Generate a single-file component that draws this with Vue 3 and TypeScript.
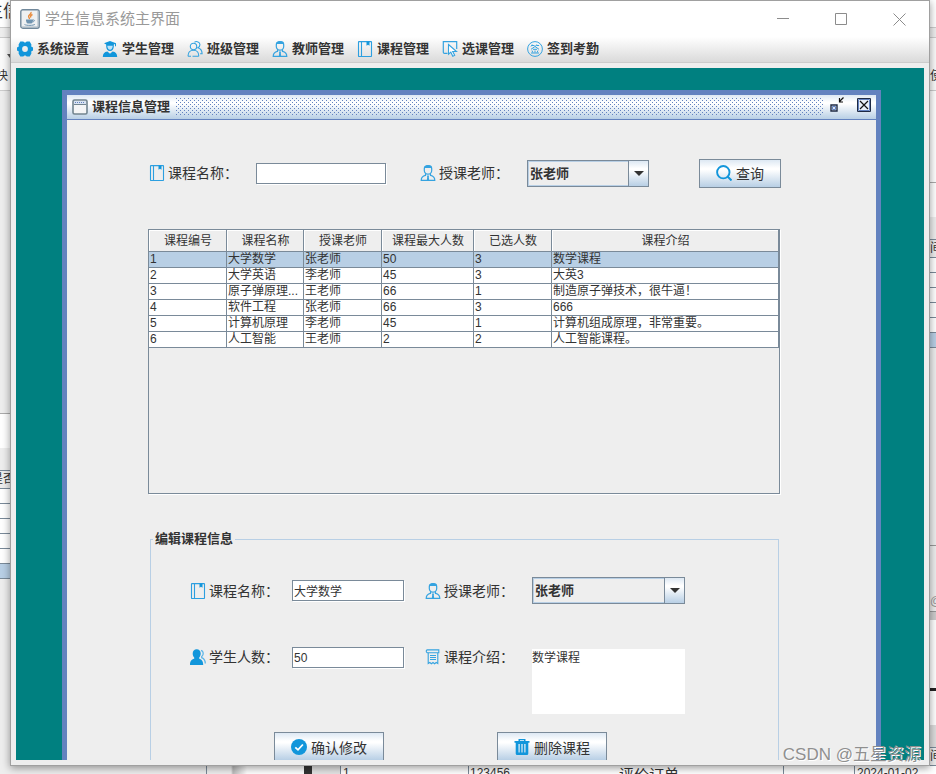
<script setup lang="ts">
import { ref } from 'vue'

interface Course {
  id: number
  name: string
  teacher: string
  max: number
  selected: number
  info: string
}

const menus = [
  { icon: 'gear', label: '系统设置' },
  { icon: 'student', label: '学生管理' },
  { icon: 'group', label: '班级管理' },
  { icon: 'teacher', label: '教师管理' },
  { icon: 'book', label: '课程管理' },
  { icon: 'pick', label: '选课管理' },
  { icon: 'sign', label: '签到考勤' },
]

const headers = ['课程编号', '课程名称', '授课老师', '课程最大人数', '已选人数', '课程介绍']
const teachers = ['张老师', '李老师', '王老师']

const courses: Course[] = [
  { id: 1, name: '大学数学', teacher: '张老师', max: 50, selected: 3, info: '数学课程' },
  { id: 2, name: '大学英语', teacher: '李老师', max: 45, selected: 3, info: '大英3' },
  { id: 3, name: '原子弹原理...', teacher: '王老师', max: 66, selected: 1, info: '制造原子弹技术，很牛逼！' },
  { id: 4, name: '软件工程', teacher: '张老师', max: 66, selected: 3, info: '666' },
  { id: 5, name: '计算机原理', teacher: '李老师', max: 45, selected: 1, info: '计算机组成原理，非常重要。' },
  { id: 6, name: '人工智能', teacher: '王老师', max: 2, selected: 2, info: '人工智能课程。' },
]

const searchName = ref('')
const searchTeacher = ref('张老师')
const current = ref(1)
const editName = ref('大学数学')
const editTeacher = ref('张老师')
const editMax = ref('50')
const editInfo = ref('数学课程')

function choose(c: Course) {
  current.value = c.id
  editName.value = c.name
  editTeacher.value = c.teacher
  editMax.value = String(c.max)
  editInfo.value = c.info
}
</script>

<template>
  <div class="screen">
    <svg class="defs" aria-hidden="true">
      <symbol id="gear" viewBox="0 0 16 16">
        <path fill="#1296db" fill-rule="evenodd" d="M3.300.5h2.900l1.800 1.300L9.800.5h2.900l1.700 3-.2 2 1.800.9v3.200l-1.800.9.200 2-1.700 3H9.800L8 14.200l-1.800 1.300H3.300l-1.700-3 .2-2L0 9.600V6.400l1.800-.9-.2-2zM8 5.100a2.900 2.900 0 1 0 0 5.800 2.900 2.900 0 0 0 0-5.800z" />
      </symbol>
      <symbol id="student" viewBox="0 0 16 16">
        <path fill="#1296db" d="M8 0l6 2.200v3h-1V3l-1.200.4v2c0 2.600-1.600 4.600-3.800 4.600S4.200 8 4.200 5.400v-2L2 2.200z" />
        <path fill="#bfe3f7" d="M5.300 4.700h5.400C10.700 7 9.700 8.700 8 8.700S5.300 7 5.300 4.700z" />
        <path fill="#1296db" d="M.8 16c0-3.400 1.500-4.800 4.600-5.400L8 12.700l2.600-2.100c3.100.6 4.600 2 4.600 5.400z" />
      </symbol>
      <symbol id="group" viewBox="0 0 16 16">
        <g fill="none" stroke="#35a3e0" stroke-width="1.100">
          <circle cx="6.500" cy="5.500" r="3.200" />
          <path d="M1 15.300c0-3.700 2-6 5.500-6 3.400 0 5.300 2.300 5.300 6M1 15.300h3M5.500 15.300h6.300M7.500 1.200c2-1.400 5.600-.3 5.400 2.600 0 1.300-.7 2.400-2 3 2.600.8 4.200 3 4.200 6h-2" />
        </g>
      </symbol>
      <symbol id="teacher" viewBox="0 0 16 16">
        <path fill="none" stroke="#35a3e0" stroke-width="1.200" d="M4.300 3.500C4.300 1.600 5.700.7 8 .7s3.700.9 3.700 2.800v2C11.700 7.600 10 9.200 8 9.200S4.300 7.600 4.300 5.500zM5.500 8.700v1.700c-3 .7-4.300 1.800-4.300 5h13.600c0-3.200-1.300-4.300-4.300-5V8.700M8 11v4" />
        <path fill="#35a3e0" d="M4 4.500C3.700 1.500 5 .3 8 .3s4.300 1.200 4 4.200L10.800 3H5.200zM7 10.500h2L8.500 12l.7 2.500L8 15.500l-1.200-1 .7-2.500z" />
      </symbol>
      <symbol id="book" viewBox="0 0 16 16">
        <path fill="none" stroke="#2c9fe0" stroke-width="1.100" d="M2 .6h12q.5 0 .5.500v14q0 .4-.5.400H2q-.5 0-.5-.5V1.100Q1.500.6 2 .6zM4.500.6v15" />
        <path fill="#1296db" d="M9.500.6h3v4.200L11 3.700 9.500 4.800z" />
      </symbol>
      <symbol id="pick" viewBox="0 0 16 16">
        <path fill="none" stroke="#35a3e0" stroke-width="1.200" d="M5.500 12.400H2.500q-1.200 0-1.200-1.200V.7h13.400V8" />
        <path fill="#fff" stroke="#35a3e0" stroke-width="1.100" d="M6.500 3.500v9.700l2.300-2 2 4.100 1.900-1-2-3.800h3.800z" />
      </symbol>
      <symbol id="sign" viewBox="0 0 16 16">
        <circle cx="8" cy="8" r="7.400" fill="none" stroke="#35a3e0" />
        <path fill="none" stroke="#35a3e0" d="M5.200 3.500L4 5.500M5 4.500h2.500M9.700 3.500l-1.200 2M9.500 4.500h2.600M8 5.500L4 8.300M8 5.500l4 2.800M6 8.300h4M5 9.500l.8 2M8 9.500v2M11 9.500l-1 2M4 12h8" />
      </symbol>
      <symbol id="search" viewBox="0 0 16 16">
        <circle cx="7.300" cy="7.200" r="6.200" fill="none" stroke="#1296db" stroke-width="1.900" />
        <path stroke="#1296db" stroke-width="2" d="M11.500 11.500l4 4" />
      </symbol>
      <symbol id="people" viewBox="0 0 16 16">
        <path fill="#1296db" d="M6.700.3c2.500 0 4 1.800 4 4.200 0 1.700-.6 3.100-1.500 4v1.300c2.600.8 4 2.200 4 6.200H0c0-4 1.400-5.400 4.200-6.200V8.500c-1-.9-1.500-2.300-1.500-4 0-2.400 1.500-4.200 4-4.200z" />
        <path fill="none" stroke="#5bb6e8" stroke-width="1.300" d="M11 1.300c2.600.6 3 4.600.7 6.200v1.200c2.400 1 3.600 2.800 3.600 5.800" />
      </symbol>
      <symbol id="note" viewBox="0 0 16 16">
        <path fill="none" stroke="#35a3e0" stroke-width="1.100" d="M3.500 3.700H2.200C.8 3 1 1.200 2.300.9h11.500v2.800H3.500zM3.200 3.700v10.800l1.600-1 1.600 1.300 1.600-1.300 1.600 1.300 1.600-1.300 1.600 1V3.700M5 6.500h6M5 8.500h6M5 10.500h6" />
      </symbol>
      <symbol id="check" viewBox="0 0 16 16">
        <circle cx="8" cy="8" r="8" fill="#1296db" />
        <path fill="none" stroke="#fff" stroke-width="1.800" d="M4.300 8.300l2.700 2.500 4.900-5.300" />
      </symbol>
      <symbol id="trash" viewBox="0 0 16 16">
        <path fill="#1296db" fill-rule="evenodd" d="M4.500 0h7v2H15.500v1.800h-1.200V14.500q0 1.500-1.500 1.500H3.200q-1.500 0-1.500-1.500V3.800H.5V2h4zM6 1.200V2h4v-.8zM4.500 5v8.500h1.200V5zM7.400 5v8.500h1.200V5zM10.300 5v8.500h1.200V5z" />
      </symbol>
    </svg>

    <div class="strip left" aria-hidden="true">
      <div class="doc-head"><span class="big">生信</span></div>
      <div class="doc-bar"></div>
      <div class="doc-tool"><i class="tri"></i><span>快</span></div>
      <div class="gap-left"></div>
      <div class="paper"></div>
      <div class="grey"></div>
      <div class="mini-row label">是否</div>
      <div v-for="n in 5" :key="n" class="mini-row"></div>
      <div class="mini-row blue"></div>
    </div>

    <main class="window">
      <header class="titlebar">
        <svg class="java" viewBox="0 0 20 20">
          <rect x=".8" y=".8" width="18.400" height="18.400" rx="2" fill="#eef0f2" stroke="#71889b" stroke-width="1.400" />
          <path d="M2 18h16V2" fill="none" stroke="#a8b6c2" />
          <path fill="none" stroke="#e8893a" stroke-width="1.400" d="M11 3c1 2-3 2.800-2.400 4.700.2.900 1 1.300.8 2.300M12.500 5.500c-2 .9-2.300 1.800-1.500 3" />
          <path fill="#6f93b0" d="M6 10.600h7v1q-.3 2.400-1.500 2.900h-4Q6.300 14 6 11.600z" />
          <path fill="none" stroke="#6f93b0" d="M13 11c2-.5 2 1.500-.5 2M4.500 15.500c2 1.200 9 1.200 10.500-.2" />
        </svg>
        <h1>学生信息系统主界面</h1>
        <button type="button" aria-label="最小化"><svg viewBox="0 0 13 13"><path d="M0 5.500h12" /></svg></button>
        <button type="button" aria-label="最大化"><svg viewBox="0 0 13 13"><path d="M.5.500h11v11H.5z" /></svg></button>
        <button type="button" aria-label="关闭"><svg viewBox="0 0 13 13"><path d="M.5.500l12 12M12.500.500l-12 12" /></svg></button>
      </header>

      <nav class="menubar">
        <button v-for="m in menus" :key="m.icon" type="button">
          <svg class="icon"><use :href="'#' + m.icon" /></svg>{{ m.label }}
        </button>
      </nav>

      <div class="body">
        <div class="desktop">
          <section class="frame">
            <div class="frame-title">
              <svg class="frame-icon" viewBox="0 0 16 16">
                <rect x="1" y="1" width="14" height="14" rx="1.500" fill="#f4f5f6" stroke="#71848f" stroke-width="1.600" />
                <path d="M2 2h12v3H2z" fill="#d8e3f2" />
                <path d="M3 3.500h10" stroke="#6382bf" stroke-dasharray="1 1" />
                <path d="M2 5.500h12" stroke="#71848f" />
              </svg>
              <h2>课程信息管理</h2>
              <div class="dots"></div>
              <button type="button" aria-label="还原">
                <svg viewBox="0 0 16 16">
                  <path d="M2 8h6v6H2z" fill="#fff" stroke="#1e2a44" stroke-width="1.400" />
                  <path d="M3.500 9.500h3v3h-3z" fill="#d8e3f2" stroke="#6382bf" />
                  <path d="M14.500.500L10.500 4.500M10.500 1v4h3.500" fill="none" stroke="#111" stroke-width="1.200" />
                </svg>
              </button>
              <button type="button" aria-label="关闭窗口">
                <svg viewBox="0 0 16 16">
                  <path d="M1.500 1.500h13v13h-13z" fill="#e8eff8" stroke="#1e2a44" />
                  <path d="M2.500 2.500h11v11h-11z" fill="none" stroke="#6382bf" />
                  <path d="M4 4l8 8M12 4l-8 8" stroke="#111" stroke-width="1.200" />
                </svg>
              </button>
            </div>

            <form class="search" @submit.prevent>
              <label for="s-name"><svg class="icon"><use href="#book" /></svg>课程名称：</label>
              <input id="s-name" v-model="searchName" class="text wide" type="text" />
              <label for="s-teacher"><svg class="icon"><use href="#teacher" /></svg>授课老师：</label>
              <span class="combo narrow">
                <select id="s-teacher" v-model="searchTeacher">
                  <option v-for="t in teachers" :key="t">{{ t }}</option>
                </select>
                <span class="arrow"><svg viewBox="0 0 10 5"><path d="M0 0h10L5 5z" /></svg></span>
              </span>
              <button class="metal query" type="submit"><svg class="icon"><use href="#search" /></svg>查询</button>
            </form>

            <div class="pane">
              <table>
                <colgroup><col class="c78" /><col class="c77" /><col class="c78" /><col class="c92" /><col class="c78" /><col /></colgroup>
                <thead>
                  <tr><th v-for="h in headers" :key="h" scope="col">{{ h }}</th></tr>
                </thead>
                <tbody>
                  <tr v-for="c in courses" :key="c.id" :class="{ on: c.id === current }" @click="choose(c)">
                    <td>{{ c.id }}</td>
                    <td>{{ c.name }}</td>
                    <td>{{ c.teacher }}</td>
                    <td>{{ c.max }}</td>
                    <td>{{ c.selected }}</td>
                    <td>{{ c.info }}</td>
                  </tr>
                </tbody>
              </table>
            </div>

            <fieldset>
              <legend>编辑课程信息</legend>
              <div class="edit first">
                <label for="e-name"><svg class="icon"><use href="#book" /></svg>课程名称：</label>
                <input id="e-name" v-model="editName" class="text short" type="text" />
                <label for="e-teacher"><svg class="icon"><use href="#teacher" /></svg>授课老师：</label>
                <span class="combo">
                  <select id="e-teacher" v-model="editTeacher">
                    <option v-for="t in teachers" :key="t">{{ t }}</option>
                  </select>
                  <span class="arrow"><svg viewBox="0 0 10 5"><path d="M0 0h10L5 5z" /></svg></span>
                </span>
              </div>
              <div class="edit second">
                <label for="e-max"><svg class="icon"><use href="#people" /></svg>学生人数：</label>
                <input id="e-max" v-model="editMax" class="text short" type="text" />
                <label for="e-info"><svg class="icon"><use href="#note" /></svg>课程介绍：</label>
                <textarea id="e-info" v-model="editInfo"></textarea>
              </div>
              <div class="actions">
                <button class="metal action" type="button"><svg class="icon"><use href="#check" /></svg>确认修改</button>
                <button class="metal action" type="button"><svg class="icon"><use href="#trash" /></svg>删除课程</button>
              </div>
            </fieldset>
          </section>
        </div>
      </div>
    </main>

    <div class="strip right" aria-hidden="true">
      <div class="doc-head"></div>
      <div class="doc-bar"></div>
      <div class="doc-tool"><span>使</span></div>
      <div class="gap-right"></div>
      <div class="paper"></div>
      <div class="grey"></div>
      <div class="mini-row label">间</div>
      <div v-for="n in 5" :key="n" class="mini-row"></div>
      <div class="mini-row blue"></div>
      <div class="tail"></div>
      <div class="at">@</div>
      <div class="sheet"></div>
      <div class="lower"></div>
      <div class="mini-row label">间</div>
    </div>

    <div class="under" aria-hidden="true">
      <span class="u-a"></span><span class="u-b"></span><span class="u-dark"></span><span class="u-c"></span>
      <span class="u-one">1</span><span class="u-num">123456</span><span class="u-text">评价订单</span>
      <span class="u-d"></span><span class="u-date">2024-01-02</span>
    </div>

    <p class="watermark">CSDN @五星资源</p>
  </div>
</template>

<style>
body {
  background: #eee;
}
</style>

<style scoped>
.screen {
  --cjk: "Liberation Sans", "Noto Sans CJK SC", sans-serif;
  --edge: #7a8a99;
  --steel: linear-gradient(#dde8f3, #fff 30%, #fff 36%, #b8cfe5);
  position: relative;
  display: grid;
  grid-template-columns: 10px minmax(0, 1fr) 6px;
  grid-template-rows: minmax(0, 1fr) 8px;
  height: 100vh;
  overflow: hidden;
  background: #eee;
  color: #333;
  font-family: var(--cjk);
  font-size: 12px;
}
.screen *,
.screen *::before {
  box-sizing: border-box;
}
.defs {
  position: absolute;
  width: 0;
  height: 0;
}
button,
input,
select,
textarea {
  margin: 0;
  padding: 0;
  border: 0;
  border-radius: 0;
  background: none;
  color: #333;
  font-family: var(--cjk);
  outline: 0;
}
h1,
h2,
p {
  margin: 0;
}
.icon {
  flex: none;
  width: 16px;
  height: 16px;
}

/* main window */
.window {
  z-index: 1;
  display: flex;
  flex-direction: column;
  border: 1px solid #a0a0a0;
  background: #fff;
  box-shadow: 0 2px 8px rgba(0, 0, 0, 0.4);
}
.titlebar {
  display: flex;
  flex: none;
  align-items: center;
  height: 36px;
  padding: 0 1px 0 9px;
}
.java {
  flex: none;
  width: 20px;
  height: 20px;
}
h1 {
  flex: 1;
  padding-left: 5px;
  color: #999;
  font-size: 15px;
  font-weight: 400;
  line-height: 20px;
}
.titlebar button {
  width: 58px;
  height: 36px;
}
.titlebar button svg {
  display: block;
  width: 13px;
  height: 13px;
  margin: auto;
}
.titlebar button path {
  fill: none;
  stroke: #8c8c8c;
}
.menubar {
  display: flex;
  flex: none;
  gap: 13px;
  height: 26px;
  padding: 0 6px 2px;
  border-bottom: 1px solid #ccc;
  background: linear-gradient(#fff, #dadada);
}
.menubar button {
  display: flex;
  align-items: center;
  gap: 4px;
  font-size: 13px;
  font-weight: 700;
  line-height: 20px;
}
.body {
  flex: 1;
  min-height: 0;
  padding: 5px;
  background: #eee;
}
.desktop {
  height: 100%;
  padding: 22px 43px 0 46px;
  overflow: hidden;
  background: #008080;
}

/* internal frame */
.frame {
  min-height: 100%;
  border: 5px solid #6382bf;
  background: #eee;
}
.frame-title {
  display: flex;
  align-items: center;
  height: 25px;
  padding: 0 4px 0 5px;
  border-bottom: 1px solid #6382bf;
  background: var(--steel);
}
.frame-icon {
  width: 16px;
  height: 16px;
}
h2 {
  padding: 0 6px 0 4px;
  font-size: 13px;
  line-height: 20px;
}
.dots {
  flex: 1;
  height: 18px;
  margin-right: 5px;
  background:
    conic-gradient(from 270deg at 1px 1px, #6382bf 90deg, transparent 0) 0 0 / 4px 4px,
    conic-gradient(from 270deg at 1px 1px, #6382bf 90deg, transparent 0) 2px 2px / 4px 4px;
}
.frame-title button {
  height: 16px;
  margin-bottom: 4px;
}
.frame-title button + button {
  margin-left: 11px;
}
.frame-title button svg {
  display: block;
  width: 16px;
  height: 16px;
}

/* shared controls */
label {
  display: flex;
  align-items: center;
  gap: 3px;
  font-size: 14px;
  line-height: 20px;
  white-space: nowrap;
}
.text {
  height: 21px;
  padding: 0 1px;
  border: 1px solid var(--edge);
  background: #fff;
  box-shadow: 1px 1px 0 #fff;
  font-size: 12px;
}
.wide {
  width: 130px;
}
.short {
  width: 112px;
}
.combo {
  position: relative;
  display: block;
  height: 27px;
  border: 1px solid var(--edge);
}
.combo select {
  display: block;
  width: 100%;
  height: 100%;
  padding: 0 20px 0 1px;
  border: 1px solid #b8cfe5;
  background: #eee;
  appearance: none;
  font-size: 13px;
  font-weight: 700;
}
.arrow {
  position: absolute;
  top: 0;
  right: 0;
  bottom: 0;
  display: grid;
  place-items: center;
  width: 20px;
  border-left: 1px solid var(--edge);
  background: var(--steel);
  pointer-events: none;
}
.arrow svg {
  width: 10px;
  height: 5px;
  fill: #333;
}
.narrow {
  width: 122px;
}
.metal {
  display: flex;
  align-items: center;
  justify-content: center;
  gap: 4px;
  height: 29px;
  border: 1px solid var(--edge);
  background: var(--steel);
  font-size: 14px;
}
.query {
  width: 82px;
}
.action {
  width: 110px;
}

.search {
  display: grid;
  grid-template-columns: 107px 164px 107px 172px auto;
  justify-content: start;
  align-items: center;
  height: 30px;
  margin: 38px 0 0 82px;
}

/* course table */
.pane {
  height: 265px;
  margin: 41px 96px 0 81px;
  border: 1px solid var(--edge);
  box-shadow: 1px 1px 0 #fff;
}
table {
  width: 100%;
  table-layout: fixed;
  border-collapse: separate;
  border-spacing: 0;
}
.c77 {
  width: 77px;
}
.c78 {
  width: 78px;
}
.c92 {
  width: 92px;
}
th,
td {
  padding: 0 0 0 1px;
  overflow: hidden;
  border-right: 1px solid var(--edge);
  border-bottom: 1px solid var(--edge);
  font-size: 12px;
  font-weight: 400;
  text-align: left;
  white-space: nowrap;
}
th {
  height: 22px;
  background: #eee;
  box-shadow: inset 1px 1px 0 #fff;
  line-height: 20px;
  text-align: center;
}
td {
  height: 16px;
  background: #fff;
  line-height: 15px;
}
.on td {
  background: #b8cfe5;
}

/* edit form */
fieldset {
  min-width: 0;
  margin: 37px 97px 0 83px;
  padding: 0 0 24px;
  border: 1px solid #b8cfe5;
}
legend {
  margin-left: 2px;
  padding: 0 2px;
  font-size: 13px;
  font-weight: 700;
  line-height: 16px;
}
.edit {
  display: grid;
  grid-template-columns: 102px 133px 107px 153px;
  padding-left: 39px;
}
.first {
  align-items: center;
  padding-top: 30px;
}
.second {
  align-items: start;
  padding-top: 43px;
}
textarea {
  display: block;
  width: 100%;
  height: 65px;
  margin-top: 2px;
  background: #fff;
  font-size: 12px;
  line-height: 18px;
  resize: none;
}
.actions {
  display: flex;
  gap: 113px;
  padding: 18px 0 0 123px;
}

/* windows behind the main one */
.strip {
  display: flex;
  flex-direction: column;
  overflow: hidden;
  white-space: nowrap;
}
.strip > div {
  flex: none;
  overflow: hidden;
}
.doc-head {
  height: 28px;
  border-bottom: 1px solid #ccc;
  background: #fff;
}
.big {
  display: block;
  margin-left: -14px;
  font-size: 17px;
  line-height: 24px;
}
.doc-bar {
  height: 10px;
  border-bottom: 1px solid #ccc;
}
.doc-tool {
  height: 53px;
  border-bottom: 1px solid #ccc;
  background: #fafafa;
}
.doc-tool span {
  display: block;
  line-height: 18px;
}
.left .doc-tool span {
  margin: 9px 0 0 -4px;
}
.right .doc-tool span {
  margin-top: 29px;
}
.tri {
  display: block;
  width: 6px;
  margin: 16px 0 0 7px;
  border: 3px solid transparent;
  border-top: 4px solid #555;
  border-bottom: 0;
}
.gap-left {
  height: 323px;
  border-bottom: 1px solid #aaa;
}
.gap-right {
  height: 92px;
  border-bottom: 1px solid #aaa;
  background: #fff;
}
.paper {
  height: 34px;
  background: #fff;
}
.grey {
  height: 22px;
}
.mini-row {
  height: 15px;
  border-bottom: 1px solid var(--edge);
  background: #fff;
}
.mini-row.label {
  height: 19px;
  border-top: 1px solid var(--edge);
  background: #eee;
  line-height: 17px;
}
.left .label {
  text-indent: -9px;
}
.mini-row.blue {
  background: #b8cfe5;
}
.tail {
  height: 198px;
  border-bottom: 1px solid #999;
}
.at {
  height: 66px;
  padding-top: 48px;
  border-bottom: 1px solid #999;
  color: #999;
  line-height: 14px;
}
.sheet {
  height: 79px;
  border-top: 8px solid #ccc;
  border-bottom: 3px solid #222;
  background: #fff;
}
.lower {
  height: 56px;
  border-bottom: 22px solid #ddd;
  background: #fff;
}
.under {
  display: flex;
  grid-column: 1 / -1;
  height: 8px;
  overflow: hidden;
  background: #fff;
  line-height: 14px;
  white-space: nowrap;
}
.under span {
  flex: none;
  height: 14px;
  border-right: 1px solid var(--edge);
}
.under .u-a {
  width: 207px;
  background: #eee;
}
.under .u-b {
  width: 97px;
  border: 0;
  background: linear-gradient(90deg, #eee 24px, #bbb 26px, #fff 40px);
}
.under .u-dark {
  width: 8px;
  border: 0;
  background: #333;
}
.under .u-c {
  width: 29px;
  background: #e4e4e4;
}
.under .u-one {
  width: 128px;
  padding-left: 2px;
}
.under .u-num {
  width: 40px;
  padding-left: 1px;
  border: 0;
}
.under .u-text {
  flex: 1;
  padding-left: 110px;
  font-size: 15px;
  line-height: 18px;
}
.under .u-d {
  width: 71px;
}
.under .u-date {
  width: 81px;
  padding-left: 2px;
  border: 0;
}
.watermark {
  position: absolute;
  right: 15px;
  bottom: 7px;
  z-index: 2;
  color: #8f8f8f;
  font-size: 17px;
  line-height: 24px;
  text-shadow: 1px 1px 0 #fff;
}
</style>
